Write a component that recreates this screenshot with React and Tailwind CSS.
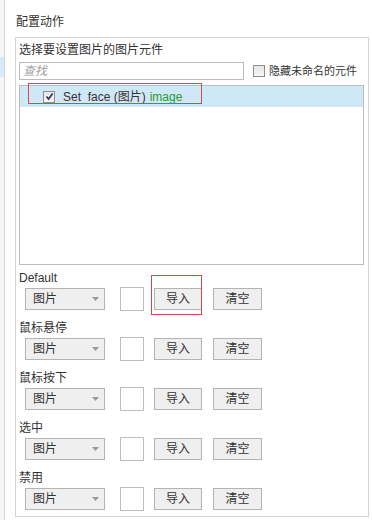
const states = ["Default", "鼠标悬停", "鼠标按下", "选中", "禁用"];

const Checkbox = ({ checked }) => (
  <span className="flex h-[12px] w-[12px] items-center justify-center border border-[#8f8f8f] bg-gradient-to-b from-[#e6e6e6] to-[#f7f7f7]">
    {checked && (
      <svg width="9" height="9" viewBox="0 0 9 9">
        <path d="M1.5 4.5 L3.6 7 L7.6 1.5" fill="none" stroke="#2b3f5c" strokeWidth="1.8" />
      </svg>
    )}
  </span>
);

const StateRow = ({ label, first }) => (
  <div className={first ? "mt-[5px]" : "mt-[9px]"}>
    <div className="h-[16px] leading-[16px]">{label}</div>
    <div className="mt-[1px] flex h-[24px] items-center">
      <div className="ml-[6px] flex h-[22px] w-[80px] items-center justify-between border border-[#b4b4b4] bg-[#efefef] pl-[7px] pr-[5px]">
        <span>图片</span>
        <svg width="7" height="4" viewBox="0 0 7 4">
          <path d="M0 0 H7 L3.5 4 Z" fill="#9a9a9a" />
        </svg>
      </div>
      <div className="ml-[15px] h-[24px] w-[24px] border border-[#bdbdbd] bg-white" />
      <div className="relative ml-[10px]">
        <button className="flex h-[22px] w-[48px] items-center justify-center border border-[#b4b4b4] bg-[#efefef]">
          导入
        </button>
        {first && (
          <div className="absolute -left-[3px] -top-[13px] h-[40px] w-[51px] border border-[#d9474b]" />
        )}
      </div>
      <button className="ml-[11px] flex h-[22px] w-[49px] items-center justify-center border border-[#b4b4b4] bg-[#efefef]">
        清空
      </button>
    </div>
  </div>
);

export default function App() {
  return (
    <div className="flex h-[520px] w-[372px] bg-white text-[12px] text-[#333] font-['Liberation_Sans','Noto_Sans_CJK_SC',sans-serif]">
      {/* left panel edge */}
      <div className="w-[5px] border-r border-[#d6d6d6] bg-[#f5f5f5]">
        <div className="mt-[57px] h-[20px] bg-[#d6ebf8]" />
      </div>

      <div className="ml-[10px]">
        <div className="pt-[14px] pl-[1px] leading-[16px]">配置动作</div>

        <div className="mt-[7px] w-[354px] border border-[#d3d3d3] pl-[3px] pr-[4px] pb-[5px]">
          <div className="pt-[4px] leading-[16px]">选择要设置图片的图片元件</div>

          <div className="mt-[4px] flex h-[18px] items-center">
            <div className="flex h-[18px] w-[225px] items-center border border-[#bcbcbc] pl-[3px] italic text-[#a0a0a0]">
              查找
            </div>
            <span className="ml-[9px]">
              <Checkbox />
            </span>
            <span className="ml-[4px] text-[11px] leading-[16px]">隐藏未命名的元件</span>
          </div>

          {/* element list */}
          <div className="relative mt-[5px] h-[180px] border border-[#bdbdbd]">
            <div className="flex h-[21px] items-center bg-[#cfe8f6] pl-[23px]">
              <Checkbox checked />
              <span className="ml-[8px]">Set&nbsp;&nbsp;face (图片)</span>
              <span className="ml-[4px] text-[#2a9a2a]">image</span>
            </div>
            <div className="absolute left-[8px] -top-[3px] h-[21px] w-[174px] border border-[#d9474b]" />
          </div>

          {states.map((s, i) => (
            <StateRow key={s} label={s} first={i === 0} />
          ))}
        </div>
      </div>
    </div>
  );
}
